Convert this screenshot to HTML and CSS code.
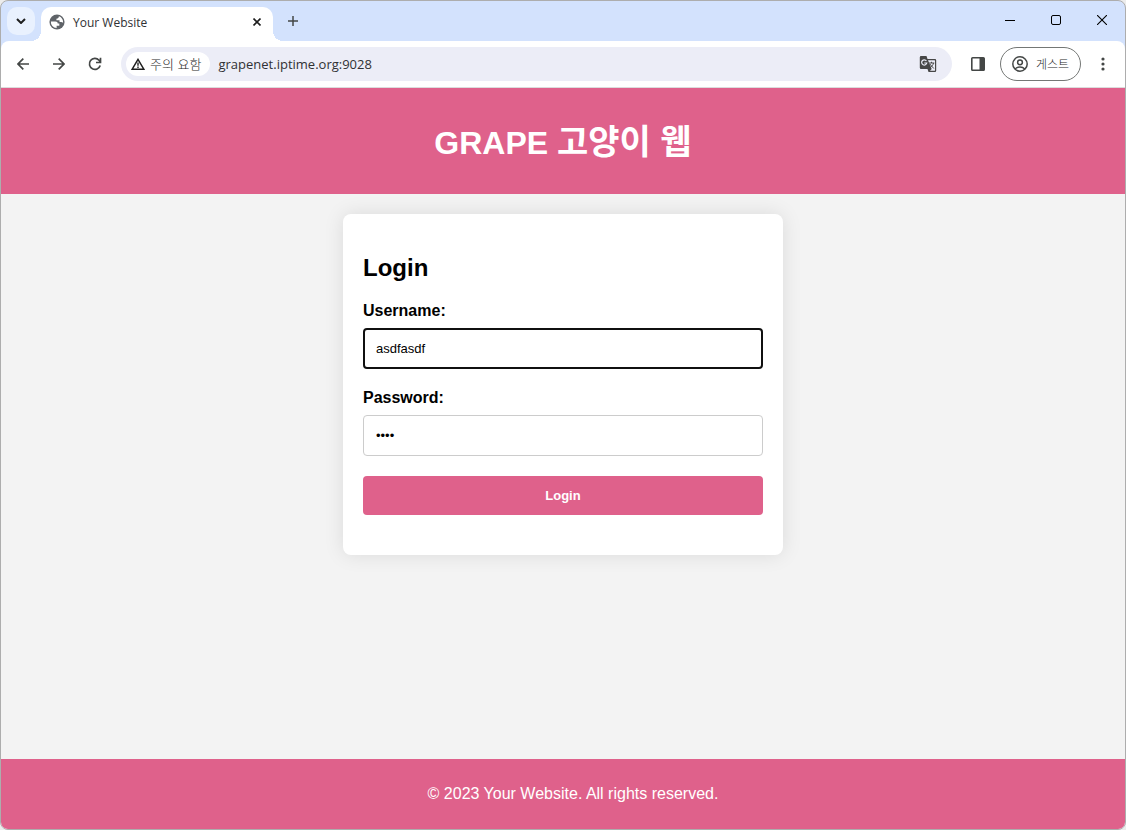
FILE: index.html
```html
<!DOCTYPE html>
<html lang="ko">
<head>
<meta charset="utf-8">
<meta name="viewport" content="width=device-width, initial-scale=1">
<title>Your Website</title>
<link rel="stylesheet" href="styles.css">
</head>
<body>
<div class="window">
  <div class="tabstrip">
    <button class="tab-search" type="button" aria-label="Search tabs">
      <svg width="10" height="6" viewBox="0 0 10 6" fill="none" stroke="#1f1f1f" stroke-width="2"><path d="M1 1l4 4 4-4"/></svg>
    </button>
    <div class="tab">
      <svg class="favicon" width="16" height="16" viewBox="1 1 22 22"><circle cx="12" cy="12" r="10.400" fill="#5f6368"/><path fill="#fff" d="M3.600 11.200h6.200c2.200 0 3.200 1 3.200 2.900h2.200v3.100h-3.700v3.200A8.400 8.400 0 0 1 3.600 11.200zM14.600 4c3.400 1.100 5.800 4.200 5.800 7.900 0 .5 0 .9-.1 1.300-.8-.8-1.600-1.200-2.600-1.200h-2.200V9.700h-4.300V7.500c2.200 0 3.400-1.300 3.400-3.500z"/></svg>
      <span class="tab-title">Your Website</span>
      <button class="tab-close" type="button" aria-label="Close tab">
        <svg width="8" height="8" viewBox="0 0 8 8" stroke="#1f1f1f" stroke-width="1.600"><path d="M.5.5l7 7M7.500.5l-7 7"/></svg>
      </button>
    </div>
    <button class="new-tab" type="button" aria-label="New tab">
      <svg width="10" height="10" viewBox="0 0 10 10" stroke="#444746" stroke-width="1.500"><path d="M5 0v10M0 5h10"/></svg>
    </button>
    <div class="window-controls">
      <button type="button" aria-label="Minimize"><svg width="10" height="10" viewBox="0 0 10 10" stroke="#000"><path d="M0 5.500h10"/></svg></button>
      <button type="button" aria-label="Maximize"><svg width="10" height="10" viewBox="0 0 10 10" fill="none" stroke="#000"><rect x=".5" y=".5" width="9" height="9" rx="1.500"/></svg></button>
      <button type="button" aria-label="Close"><svg width="10" height="10" viewBox="0 0 10 10" stroke="#000" stroke-width="1.100"><path d="M0 0l10 10M10 0L0 10"/></svg></button>
    </div>
  </div>

  <div class="toolbar">
    <div class="nav">
      <button type="button" aria-label="Back"><svg width="12" height="12" viewBox="0 0 12 12" fill="none" stroke="#444746" stroke-width="1.700"><path d="M12 6H1M6.300.7L1 6l5.300 5.300"/></svg></button>
      <button type="button" aria-label="Forward"><svg width="12" height="12" viewBox="0 0 12 12" fill="none" stroke="#444746" stroke-width="1.700"><path d="M0 6h11M5.700.7L11 6l-5.300 5.300"/></svg></button>
      <button type="button" aria-label="Reload"><svg width="14" height="14" viewBox="0 0 14 14" fill="none" stroke="#444746" stroke-width="1.700"><path d="M12.200 8.500A5.500 5.500 0 1 1 11 3.200L12.500 5M12.500.8v4.700H8"/></svg></button>
    </div>
    <div class="omnibox">
      <button class="site-info" type="button">
        <svg width="14" height="12" viewBox="0 0 14 12"><path fill="none" stroke="#1f1f1f" stroke-width="1.500" d="M7 1.400L1.200 11.200h11.600z"/><path stroke="#1f1f1f" stroke-width="1.400" d="M7 4.500v3.200M7 8.500v1.400"/></svg>
        <span>주의 요함</span>
      </button>
      <input class="url" type="text" aria-label="Address" value="grapenet.iptime.org:9028">
      <button class="translate" type="button" aria-label="Translate">
        <svg width="18" height="18" viewBox="0 0 18 18"><path fill="#474747" d="M2 1h5.500l1 3H16q1.200 0 1.200 1.200v10.600q0 1.200-1.200 1.200H9.500l-1-3H2q-1.200 0-1.200-1.200V2.200Q.8 1 2 1z"/><path fill="#ecedf7" d="M9 5.200h6.400q.6 0 .6.600v9.400q0 .6-.6.600H11l1.700-1.900z"/><path fill="none" stroke="#ecedf7" stroke-width="1.200" d="M7.400 6A2.600 2.600 0 1 0 7.800 8H5.300"/><path fill="none" stroke="#474747" d="M9.800 8h5.500M12.500 6.800V8M14.500 8c-.4 2-1.700 3.500-3.200 4.500M10.800 9l4 4.500"/></svg>
      </button>
    </div>
    <button class="side-panel" type="button" aria-label="Side panel">
      <svg width="14" height="14" viewBox="0 0 14 14"><rect x=".8" y=".8" width="12.400" height="12.400" rx=".8" fill="none" stroke="#444746" stroke-width="1.600"/><path fill="#444746" d="M8.500 1H13v12H8.500z"/></svg>
    </button>
    <button class="profile" type="button">
      <svg width="16" height="16" viewBox="0 0 16 16" fill="none" stroke="#444746" stroke-width="1.500"><circle cx="8" cy="8" r="7.200"/><circle cx="8" cy="6.300" r="2.400"/><path d="M3.200 13c2.500-2.600 7.100-2.600 9.600 0"/></svg>
      <span>게스트</span>
    </button>
    <button class="menu" type="button" aria-label="Menu">
      <svg width="4" height="14" viewBox="0 0 4 14" fill="#444746"><circle cx="2" cy="2" r="1.600"/><circle cx="2" cy="7" r="1.600"/><circle cx="2" cy="12" r="1.600"/></svg>
    </button>
  </div>

  <div class="page">
    <header class="site-header"><h1>GRAPE <span class="korean">고양이 웹</span></h1></header>
    <main class="content">
      <form class="card">
        <h2>Login</h2>
        <label for="username">Username:</label>
        <input class="field active" id="username" type="text" value="asdfasdf">
        <label for="password">Password:</label>
        <input class="field" id="password" type="password" value="asdf">
        <button class="submit" type="button">Login</button>
      </form>
    </main>
    <footer class="site-footer">© 2023 Your Website. All rights reserved.</footer>
  </div>
</div>
</body>
</html>
```
FILE: styles.css
```css
* {
  box-sizing: border-box;
}

body {
  margin: 0;
  background: #ececec;
  font-family: "Liberation Sans", "Noto Sans CJK KR", sans-serif;
}

button {
  display: flex;
  align-items: center;
  justify-content: center;
  flex-shrink: 0;
  margin: 0;
  padding: 0;
  border: 0;
  background: none;
}

svg {
  display: block;
  flex-shrink: 0;
}

.window {
  display: flex;
  flex-direction: column;
  min-height: 100vh;
  overflow: hidden;
  border: 1px solid #adadad;
  border-radius: 8px;
  background: #d3e2fd;
}

/* Tab strip */
.tabstrip {
  display: flex;
  height: 40px;
  padding-left: 6px;
}

.tab-search {
  width: 28px;
  height: 28px;
  margin-top: 6px;
  border-radius: 10px;
  background: #e9f1fe;
}

.tab {
  position: relative;
  display: flex;
  align-items: center;
  width: 232px;
  height: 34px;
  margin: 6px 0 0 6px;
  padding: 0 8px 4px;
  border-radius: 10px 10px 0 0;
  background: #fff;
}

.tab::before,
.tab::after {
  content: "";
  position: absolute;
  bottom: 0;
  width: 10px;
  height: 10px;
}

.tab::before {
  right: 100%;
  background: radial-gradient(circle at 0 0, transparent 10px, #fff 10px);
}

.tab::after {
  left: 100%;
  background: radial-gradient(circle at 100% 0, transparent 10px, #fff 10px);
}

.tab-title {
  flex: 1;
  margin-left: 8px;
  padding-top: 2px;
  color: #303134;
  font: 12px/16px "Open Sans", "Noto Sans CJK KR", sans-serif;
}

.tab-close {
  width: 16px;
  height: 16px;
}

.new-tab {
  width: 28px;
  height: 28px;
  margin: 6px 0 0 6px;
}

.window-controls {
  display: flex;
  margin-left: auto;
}

.window-controls button {
  width: 46px;
  height: 38px;
}

/* Toolbar */
.toolbar {
  display: flex;
  align-items: center;
  height: 47px;
  padding: 0 8px 0 4px;
  border-bottom: 1px solid #dcdcdc;
  border-radius: 8px 8px 0 0;
  background: #fff;
}

.nav {
  display: flex;
}

.nav button {
  width: 36px;
  height: 34px;
}

.omnibox {
  display: flex;
  flex: 1;
  align-items: center;
  min-width: 0;
  height: 34px;
  margin-left: 8px;
  padding: 0 14px 0 5px;
  border-radius: 17px;
  background: #ecedf7;
}

.site-info {
  gap: 5px;
  height: 24px;
  padding: 0 9px 0 5px;
  border-radius: 12px;
  background: #fff;
  color: #1f1f1f;
  font: 300 13px/20px "Noto Sans CJK KR", sans-serif;
}

.url {
  flex: 1;
  min-width: 0;
  margin: 0;
  padding: 0 8px;
  border: 0;
  outline: 0;
  background: none;
  color: #303134;
  font: 13px/20px "Open Sans", sans-serif;
}

.translate {
  width: 20px;
  height: 24px;
}

.side-panel {
  width: 34px;
  height: 34px;
  margin-left: 9px;
}

.profile {
  gap: 8px;
  height: 34px;
  margin-left: 5px;
  padding: 0 11px;
  border: 1px solid #747775;
  border-radius: 17px;
  color: #1f1f1f;
  font: 300 12px/16px "Noto Sans CJK KR", sans-serif;
}

.menu {
  width: 28px;
  height: 34px;
  margin-left: 8px;
}

/* Page */
.page {
  display: flex;
  flex: 1;
  flex-direction: column;
  background: #f3f3f3;
}

.site-header {
  padding: 36px 20px 32px;
  background: #df618b;
  color: #fff;
  text-align: center;
}

.site-header h1 {
  margin: 0;
  font-size: 32px;
  line-height: 38px;
}

.korean {
  font-size: 34px;
  line-height: 1;
}

.content {
  flex: 1;
  padding: 20px;
}

.card {
  display: flex;
  flex-direction: column;
  max-width: 440px;
  margin: 0 auto;
  padding: 40px 20px;
  border-radius: 8px;
  background: #fff;
  box-shadow: 0 0 20px rgba(0, 0, 0, 0.1);
}

.card h2 {
  margin: 0 0 20px;
  font-size: 24px;
  line-height: 28px;
}

.card label {
  margin-bottom: 8px;
  font-size: 16px;
  font-weight: bold;
  line-height: 18px;
}

.field {
  width: 100%;
  height: 41px;
  margin: 0 0 20px;
  padding: 0 12px;
  border: 1px solid #ccc;
  border-radius: 4px;
  outline: 0;
  background: #fff;
  color: #000;
  font: 13px/16px "Liberation Sans", sans-serif;
}

.field.active {
  padding: 0 11px;
  border: 2px solid #101010;
}

.submit {
  height: 39px;
  border-radius: 4px;
  background: #df618b;
  color: #fff;
  font: bold 13px/16px "Liberation Sans", sans-serif;
}

.site-footer {
  padding: 26px 0 26px 20px;
  background: #df618b;
  color: #fff;
  font-size: 16px;
  line-height: 18px;
  text-align: center;
}
```
